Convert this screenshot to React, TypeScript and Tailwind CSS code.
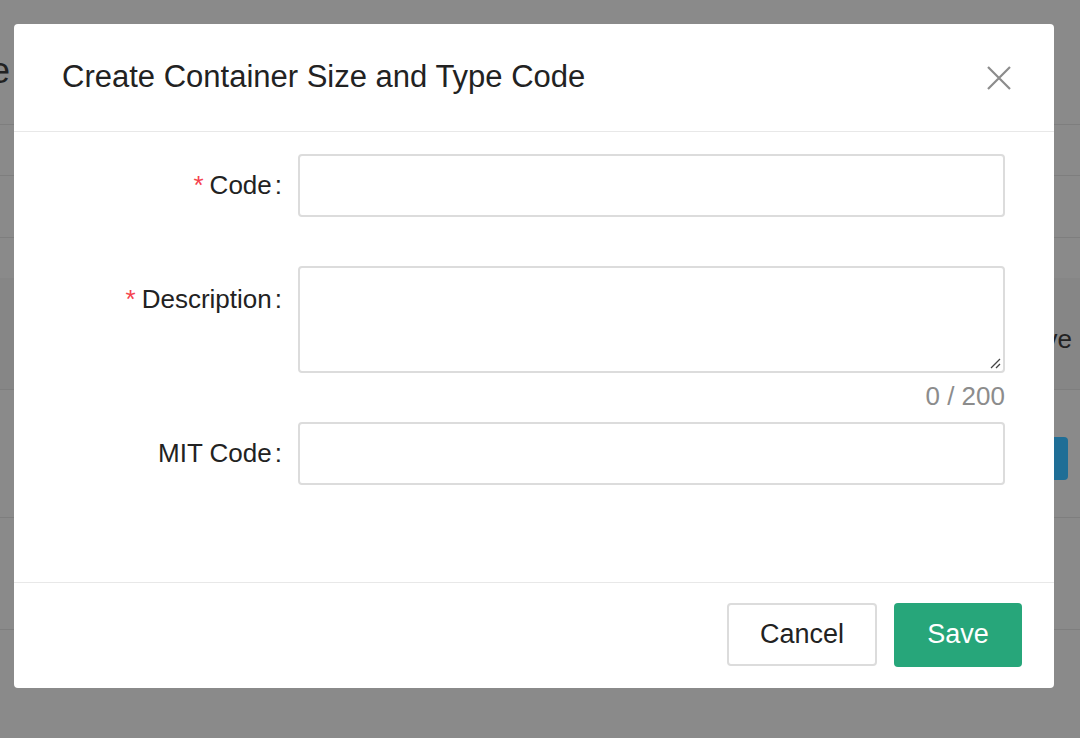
export default function App() {
  const font = { fontFamily: '"Liberation Sans", Arial, sans-serif' };
  return (
    <div className="relative w-[1080px] h-[738px] overflow-hidden bg-[#8a8a8a]" style={font}>
      {/* underlying page (dimmed) */}
      <div className="flex flex-col">
        <div className="h-[125px] border-b border-[#7e7e7e] relative">
          <span className="absolute left-[-10px] top-[44px] text-[36px] text-[#222]">e</span>
        </div>
        <div className="h-[51px] border-b border-[#7e7e7e]" />
        <div className="h-[62px] border-b border-[#7e7e7e]" />
        <div className="h-[40px]" />
        <div className="h-[112px] border-b border-[#7e7e7e] bg-[#868686] relative">
          <span className="absolute right-[8px] top-[42px] text-[26px] text-[#222]">ve</span>
        </div>
        <div className="h-[128px] border-b border-[#7e7e7e] relative">
          <div className="absolute right-[12px] top-[47px] w-[30px] h-[43px] rounded bg-[#1f6e96]" />
        </div>
        <div className="h-[112px] border-b border-[#7e7e7e]" />
      </div>

      {/* modal */}
      <div className="absolute left-[14px] top-[24px] w-[1040px] h-[664px] bg-white rounded-[4px] flex flex-col">
        <div className="h-[108px] border-b border-[#e8e8e8] flex items-center justify-between pl-[48px] pr-[42px]">
          <span className="text-[31px] text-[#222]">Create Container Size and Type Code</span>
          <svg width="26" height="26" viewBox="0 0 26 26" stroke="#8c8c8c" strokeWidth="2.2" fill="none">
            <path d="M2 2 L24 24 M24 2 L2 24" />
          </svg>
        </div>
        <div className="flex-1 flex flex-col pt-[22px] text-[26px] text-[#222]">
          <div className="flex items-center h-[63px]">
            <div className="w-[284px] pr-[16px] text-right"><span className="text-[#f5424e] mr-[6px]">*</span>Code<span className="ml-[3px]">:</span></div>
            <div className="w-[707px] h-[63px] border-2 border-[#dcdcdc] rounded-[4px]" />
          </div>
          <div className="flex mt-[49px]">
            <div className="w-[284px] pr-[16px] text-right pt-[14px]"><span className="text-[#f5424e] mr-[6px]">*</span>Description<span className="ml-[3px]">:</span></div>
            <div className="flex flex-col items-end">
              <div className="w-[707px] h-[107px] border-2 border-[#dcdcdc] rounded-[4px] relative">
                <svg className="absolute right-[2px] bottom-[2px]" width="12" height="12" viewBox="0 0 12 12" stroke="#444" strokeWidth="1.3">
                  <path d="M2 11 L11 2 M7 11 L11 7" />
                </svg>
              </div>
              <div className="text-[26px] text-[#8c8c8c] mt-[6px] leading-[34px]">0 / 200</div>
            </div>
          </div>
          <div className="flex items-center h-[63px] mt-[9px]">
            <div className="w-[284px] pr-[16px] text-right">MIT Code<span className="ml-[3px]">:</span></div>
            <div className="w-[707px] h-[63px] border-2 border-[#dcdcdc] rounded-[4px]" />
          </div>
        </div>
        <div className="h-[106px] border-t border-[#e8e8e8] flex items-center justify-end gap-[17px] pr-[32px] pb-[2px]">
          <button className="w-[150px] h-[63px] border-2 border-[#dcdcdc] rounded-[4px] text-[27px] text-[#222] bg-white">Cancel</button>
          <button className="w-[128px] h-[64px] rounded-[4px] text-[27px] text-white bg-[#27a67a]">Save</button>
        </div>
      </div>
    </div>
  );
}
